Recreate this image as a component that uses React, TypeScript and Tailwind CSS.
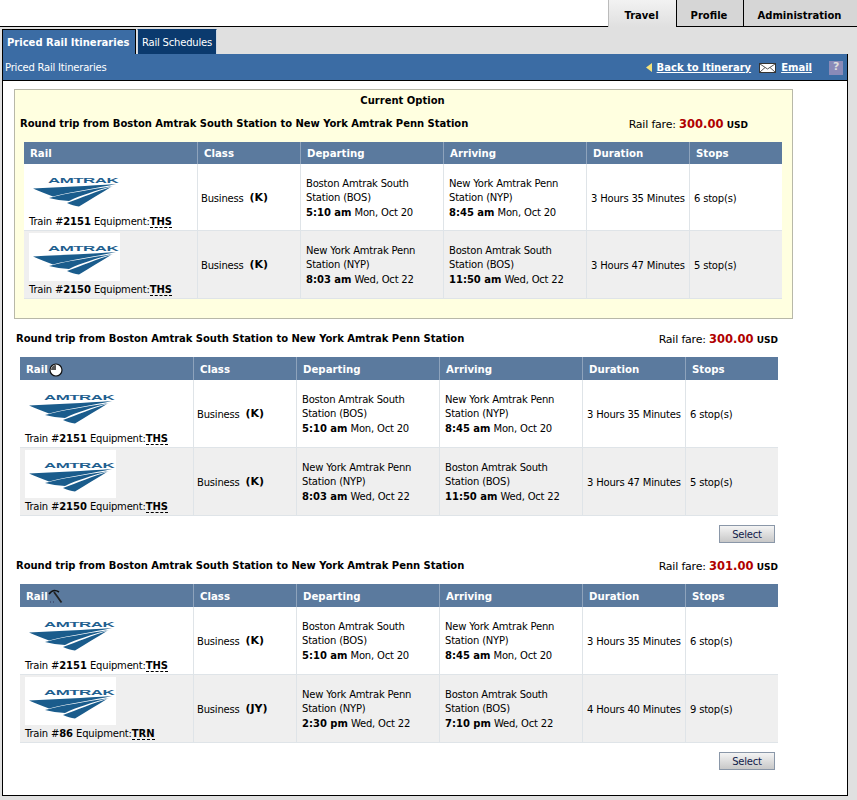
import React from "react";

const font = { fontFamily: '"DejaVu Sans", sans-serif' };

function Logo() {
  return (
    <div className="w-[91px] h-[48px] bg-white">
      <svg width="91" height="48" viewBox="0 0 91 48">
        <text transform="translate(19 17.5) scale(2.6 1)" fontFamily="Liberation Sans, sans-serif" fontWeight="700" fontSize="6.5" fill="#1f5f8f">AMTRAK</text>
        <path d="M4 23.5 C30 22 60 21 87 19 C70 23 45 26 24 31.5 C17 29 10 26 4 23.5Z" fill="#1a5c8c" />
        <path d="M20 33 C38 28 60 25 84 21 C66 26 52 30 40 36 C33 35.5 26 34.5 20 33Z" fill="#1a5c8c" />
        <path d="M38 38 C52 33 68 26 82 22 C72 28 61 35 50 41.5 C46 41 42 40 38 38Z" fill="#1a5c8c" />
      </svg>
    </div>
  );
}

const Clock = () => (
  <svg width="14" height="14" viewBox="0 0 14 14" className="ml-[1px]">
    <circle cx="7" cy="7" r="6" fill="#fff" stroke="#111" strokeWidth="1.2" />
    <path d="M7 7V2A5 5 0 0 0 2 7Z" fill="#555" />
  </svg>
);

const Pick = () => (
  <svg width="15" height="15" viewBox="0 0 15 15">
    <path d="M1 5C4 1 8 1 11 3" stroke="#111" strokeWidth="1.6" fill="none" />
    <path d="M6 3L13.5 13.5" stroke="#222" strokeWidth="1.8" />
    <path d="M2 13h1M5 13h1" stroke="#335" strokeWidth="1" />
  </svg>
);

type Row = { train: string; eq: string; cls: string; dep: string[]; depT: string; depD: string; arr: string[]; arrT: string; arrD: string; dur: string; stops: string };

const BOS = ["Boston Amtrak South", "Station (BOS)"];
const NYP = ["New York Amtrak Penn", "Station (NYP)"];

const out: Row = { train: "2151", eq: "THS", cls: "K", dep: BOS, depT: "5:10 am", depD: "Mon, Oct 20", arr: NYP, arrT: "8:45 am", arrD: "Mon, Oct 20", dur: "3 Hours 35 Minutes", stops: "6 stop(s)" };
const back: Row = { train: "2150", eq: "THS", cls: "K", dep: NYP, depT: "8:03 am", depD: "Wed, Oct 22", arr: BOS, arrT: "11:50 am", arrD: "Wed, Oct 22", dur: "3 Hours 47 Minutes", stops: "5 stop(s)" };
const alt: Row = { train: "86", eq: "TRN", cls: "JY", dep: NYP, depT: "2:30 pm", depD: "Wed, Oct 22", arr: BOS, arrT: "7:10 pm", arrD: "Wed, Oct 22", dur: "4 Hours 40 Minutes", stops: "9 stop(s)" };

const grid = "grid grid-cols-[174px_103px_143px_143px_103px_92px] w-[758px]";

function Place({ lines, t, d }: { lines: string[]; t: string; d: string }) {
  return (
    <div className="flex flex-col justify-center pl-[5px] pt-[2px] border-r border-[#dfe4e8] leading-[14px]">
      <div>{lines[0]}</div>
      <div>{lines[1]}</div>
      <div className="mt-[1px]"><b>{t}</b> {d}</div>
    </div>
  );
}

function TableRow({ r, alt, short }: { r: Row; alt: boolean; short: boolean }) {
  return (
    <div className={`${grid} ${short ? "h-[67px]" : "h-[68px]"} border-b border-[#dfe4e8] ${alt ? "bg-[#efefef]" : "bg-white"}`}>
      <div className="pl-[5px] pb-[1px] border-r border-[#dfe4e8] flex flex-col justify-end">
        <div className="mb-[2px]"><Logo /></div>
        <div className="whitespace-nowrap leading-[14px]">
          Train #<b>{r.train}</b> Equipment:<b className="border-b border-dashed border-black">{r.eq}</b>
        </div>
      </div>
      <div className="flex items-center pl-[3px] pt-[2px] border-r border-[#dfe4e8]">Business&nbsp;&nbsp;<b className="text-[11px]">({r.cls})</b></div>
      <Place lines={r.dep} t={r.depT} d={r.depD} />
      <Place lines={r.arr} t={r.arrT} d={r.arrD} />
      <div className="flex items-center pl-[4px] pt-[2px] border-r border-[#dfe4e8] whitespace-nowrap">{r.dur}</div>
      <div className="flex items-center pl-[4px] pt-[2px]">{r.stops}</div>
    </div>
  );
}

function Table({ rows, icon, compact }: { rows: Row[]; icon?: React.ReactNode; compact?: boolean }) {
  const h = "flex items-center pl-[6px] pt-[2px] border-r border-[#8ea3bc] font-bold text-white text-[10.2px] tracking-normal";
  return (
    <div className="w-[758px]">
      <div className={`${grid} ${compact ? "h-[22px]" : "h-[23px]"} bg-[#5b7a9e]`}>
        <div className={h}>Rail{icon}</div>
        <div className={h}>Class</div>
        <div className={h}>Departing</div>
        <div className={h}>Arriving</div>
        <div className={h}>Duration</div>
        <div className="flex items-center pl-[6px] pt-[2px] font-bold text-white text-[10.2px] tracking-normal">Stops</div>
      </div>
      {rows.map((r, i) => (
        <TableRow key={i} r={r} alt={i % 2 === 1} short={!!compact && i === 0} />
      ))}
    </div>
  );
}

function Title({ fare }: { fare: string }) {
  return (
    <div className="flex justify-between items-center h-[20px]">
      <span className="font-bold tracking-[-0.03px]">Round trip from Boston Amtrak South Station to New York Amtrak Penn Station</span>
      <span className="whitespace-nowrap text-[11px] pt-[3px]">
        Rail fare: <b className="text-[11.5px] text-[#b00000]">{fare}</b> <b className="text-[9px]">USD</b>
      </span>
    </div>
  );
}

function SelectBtn() {
  return (
    <div className="flex justify-end w-[758px] mt-[9px] pr-[3px]">
      <button className="w-[56px] h-[18px] pt-[1px] border border-[#8a97a8] bg-gradient-to-b from-[#f4f4f4] to-[#c8c8c8] text-[10px] text-[#10204a] leading-none">Select</button>
    </div>
  );
}

export default function App() {
  return (
    <div style={font} className="w-[857px] h-[800px] bg-[#e0e0e0] overflow-hidden text-[10px] text-black tracking-[-0.2px] [&_b]:tracking-normal">
      <div className="flex h-[27px] tracking-normal">
        <div className="flex-1 bg-white border-b border-black" />
        <div className="w-[68px] bg-gradient-to-b from-[#f2f2f2] to-[#e0e0e0] flex items-center justify-center font-bold text-[10px] pt-[4px] pr-[2px] border-l border-[#bbb]">Travel</div>
        <div className="w-[67px] bg-[#d6d6d6] flex items-center justify-center font-bold text-[10px] pt-[4px] pr-[2px] border-l border-b border-black">Profile</div>
        <div className="w-[114px] bg-[#d6d6d6] flex items-center justify-center font-bold text-[10px] pt-[4px] pr-[2px] border-l border-b border-black">Administration</div>
      </div>
      <div className="flex h-[27px] pl-[2px] pt-[2px] gap-[1px]">
        <div className="w-[134px] bg-[#3b6ca4] border-t border-l border-r border-black text-white font-bold text-[10px] tracking-normal flex items-center pl-[4px] whitespace-nowrap">Priced Rail Itineraries</div>
        <div className="w-[80px] bg-[#0b3a6e] border-t border-l border-r border-[#cfd8e2] border-t-[#0b3a6e] text-white flex items-center justify-center whitespace-nowrap">Rail Schedules</div>
      </div>
      <div className="mx-[2px] w-[846px] h-[742px] border-l border-r border-b border-black bg-white">
        <div className="h-[27px] bg-[#3b6ca4] border-b border-black flex items-center text-white pl-[2px]">
          <span>Priced Rail Itineraries</span>
          <div className="ml-auto flex items-center pr-[4px] pt-[1px]">
            <svg width="7" height="9" viewBox="0 0 7 9"><path d="M6 0V9L0 4.5Z" fill="#f5e27a" /></svg>
            <a className="ml-[4px] font-bold underline text-[10px] tracking-normal">Back to Itinerary</a>
            <svg width="17" height="10" viewBox="0 0 17 10" className="ml-[8px]">
              <rect x="0.5" y="0.5" width="16" height="9" fill="#fff" stroke="#333" />
              <path d="M1 1L8.5 6L16 1M1 9L6 4.5M16 9L11 4.5" stroke="#555" fill="none" />
            </svg>
            <a className="ml-[5px] font-bold underline text-[10px] tracking-normal">Email</a>
            <div className="ml-[17px] w-[14px] h-[14px] bg-[#8a8ab8] text-[#ddd] flex items-center justify-center font-bold text-[11px]">?</div>
          </div>
        </div>
        <div className="pl-[11px]">
          <div className="mt-[8px] w-[779px] h-[230px] border border-[#b8b8a8] bg-[#ffffe0] pt-[4px] pl-[5px] pr-[44px]">
            <div className="text-center font-bold tracking-normal w-[767px] leading-[14px] pr-[2px]">Current Option</div>
            <div className="mt-[5px]"><Title fare="300.00" /></div>
            <div className="mt-[9px] ml-[4px]"><Table rows={[out, back]} compact /></div>
          </div>
          <div className="ml-[2px] w-[762px] mt-[9px]"><Title fare="300.00" /></div>
          <div className="ml-[6px] mt-[9px]">
            <Table rows={[out, back]} icon={<Clock />} />
            <SelectBtn />
          </div>
          <div className="ml-[2px] w-[762px] mt-[12px]"><Title fare="301.00" /></div>
          <div className="ml-[6px] mt-[9px]">
            <Table rows={[out, alt]} icon={<Pick />} />
            <SelectBtn />
          </div>
        </div>
      </div>
    </div>
  );
}
